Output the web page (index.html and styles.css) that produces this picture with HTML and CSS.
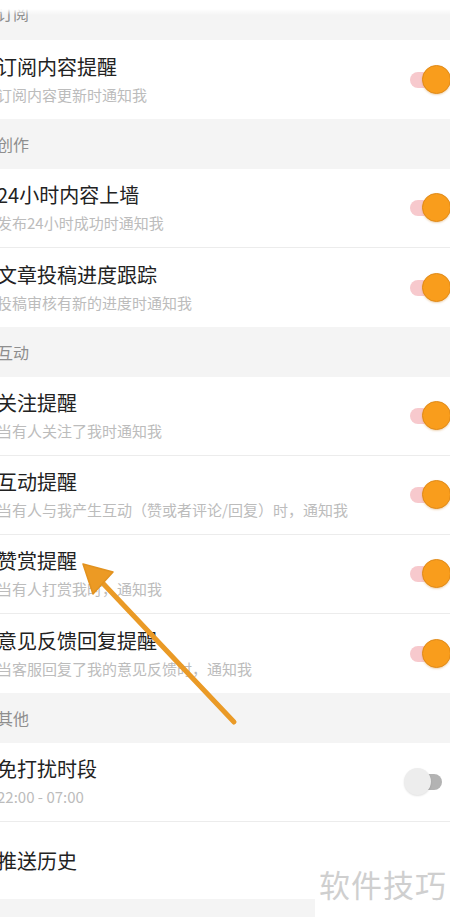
FILE: index.html
```html
<!DOCTYPE html>
<html lang="zh-CN">
<head>
    <meta charset="UTF-8">
    <meta name="viewport" content="width=device-width, initial-scale=1.0">
    <title>推送设置</title>
    <link rel="stylesheet" href="styles.css">
</head>
<body>

    <div class="page">
        <div class="top-fade"></div>

        <div class="section-title section-title--cut">订阅</div>
        <div class="setting-item">
            <div class="setting-text">
                <div class="setting-name">订阅内容提醒</div>
                <div class="setting-desc">订阅内容更新时通知我</div>
            </div>
            <span class="switch on"><span class="knob"></span></span>
        </div>

        <div class="section-title">创作</div>
        <div class="setting-item">
            <div class="setting-text">
                <div class="setting-name">24小时内容上墙</div>
                <div class="setting-desc">发布24小时成功时通知我</div>
            </div>
            <span class="switch on"><span class="knob"></span></span>
        </div>
        <div class="setting-item">
            <div class="setting-text">
                <div class="setting-name">文章投稿进度跟踪</div>
                <div class="setting-desc">投稿审核有新的进度时通知我</div>
            </div>
            <span class="switch on"><span class="knob"></span></span>
        </div>

        <div class="section-title">互动</div>
        <div class="setting-item">
            <div class="setting-text">
                <div class="setting-name">关注提醒</div>
                <div class="setting-desc">当有人关注了我时通知我</div>
            </div>
            <span class="switch on"><span class="knob"></span></span>
        </div>
        <div class="setting-item">
            <div class="setting-text">
                <div class="setting-name">互动提醒</div>
                <div class="setting-desc">当有人与我产生互动（赞或者评论/回复）时，通知我</div>
            </div>
            <span class="switch on"><span class="knob"></span></span>
        </div>
        <div class="setting-item">
            <div class="setting-text">
                <div class="setting-name">赞赏提醒</div>
                <div class="setting-desc">当有人打赏我时，通知我</div>
            </div>
            <span class="switch on"><span class="knob"></span></span>
        </div>
        <div class="setting-item">
            <div class="setting-text">
                <div class="setting-name">意见反馈回复提醒</div>
                <div class="setting-desc">当客服回复了我的意见反馈时，通知我</div>
            </div>
            <span class="switch on"><span class="knob"></span></span>
        </div>

        <div class="section-title">其他</div>
        <div class="setting-item">
            <div class="setting-text">
                <div class="setting-name">免打扰时段</div>
                <div class="setting-desc">22:00 - 07:00</div>
            </div>
            <span class="switch"><span class="knob"></span></span>
        </div>
        <div class="setting-item setting-item--single">
            <div class="setting-text">
                <div class="setting-name">推送历史</div>
            </div>
        </div>

        <!-- annotation arrow drawn over the list -->
        <svg class="arrow" width="450" height="917" viewBox="0 0 450 917">
            <line x1="234" y1="722" x2="96" y2="576" stroke="#ea9a26" stroke-width="5" stroke-linecap="round"/>
            <polygon points="83,564 113,572 93,594" fill="#ec9a24" stroke="#e2921f" stroke-width="1.5" stroke-linejoin="round"/>
        </svg>

        <div class="watermark">软件技巧</div>
    </div>

</body>
</html>
```

FILE: styles.css
```css
:root {
    --bg-gray: #f4f4f4;
    --line-color: #ececec;
    --title-color: #222;
    --desc-color: #bcbcbc;
    --header-color: #8e8e8e;
    --accent: #f99d1c;
    --accent-dark: #e08a18;
    --track-on: #f7c9cd;
    --cjk-font: "Noto Sans CJK SC", "Noto Sans", sans-serif;
}

body {
    margin: 0;
    padding: 0;
    background: var(--bg-gray);
    font-family: var(--cjk-font);
}

.page {
    position: relative;
    width: 450px;
    height: 917px;
    overflow: hidden;
    background: var(--bg-gray);
}

/* soft white band at the very top of the screenshot */
.top-fade {
    position: absolute;
    top: 0;
    left: 0;
    right: 0;
    height: 15px;
    background: linear-gradient(#fff 60%, rgba(255, 255, 255, 0));
    z-index: 2;
}

.section-title {
    height: 50px;
    line-height: 50px;
    margin-left: -3px;
    color: var(--header-color);
    font-size: 16px;
    background: var(--bg-gray);
}

.section-title--cut {
    margin-top: -8px;
    height: 48px;
    line-height: 43px;
}

.setting-item {
    display: flex;
    align-items: center;
    justify-content: space-between;
    height: 79px;
    box-sizing: border-box;
    background: #fff;
    border-bottom: 1px solid var(--line-color);
}

.setting-item:has(+ .section-title) {
    border-bottom: none;
}

.setting-item--single {
    height: 77px;
    border-bottom: none;
}

.setting-text {
    margin-left: -3px;
    display: flex;
    flex-direction: column;
    gap: 6px;
}

.setting-name {
    font-size: 20px;
    line-height: 24px;
    color: var(--title-color);
}

.setting-desc {
    font-size: 15px;
    line-height: 20px;
    color: var(--desc-color);
}

.switch {
    position: relative;
    width: 32px;
    height: 16px;
    margin-right: 8px;
    border-radius: 8px;
    background: #b3b3b3;
}

.switch .knob {
    position: absolute;
    top: -6px;
    left: -6px;
    width: 27px;
    height: 27px;
    border-radius: 50%;
    background: #ededed;
    box-shadow: 0 1px 2px rgba(0, 0, 0, 0.12);
}

.switch.on {
    background: var(--track-on);
}

.switch.on .knob {
    left: auto;
    right: -9px;
    top: -7px;
    width: 27px;
    height: 27px;
    background: var(--accent);
    border: 1px solid var(--accent-dark);
    box-shadow: 0 1px 2px rgba(200, 120, 20, 0.3);
}

.arrow {
    position: absolute;
    top: 0;
    left: 0;
    pointer-events: none;
    z-index: 3;
}

.watermark {
    position: absolute;
    right: 0;
    bottom: 0;
    width: 135px;
    height: 56px;
    padding-left: 4px;
    box-sizing: border-box;
    background: #fff;
    color: #cfcfcf;
    font-size: 31px;
    line-height: 46px;
    letter-spacing: 1px;
    z-index: 3;
}
```
